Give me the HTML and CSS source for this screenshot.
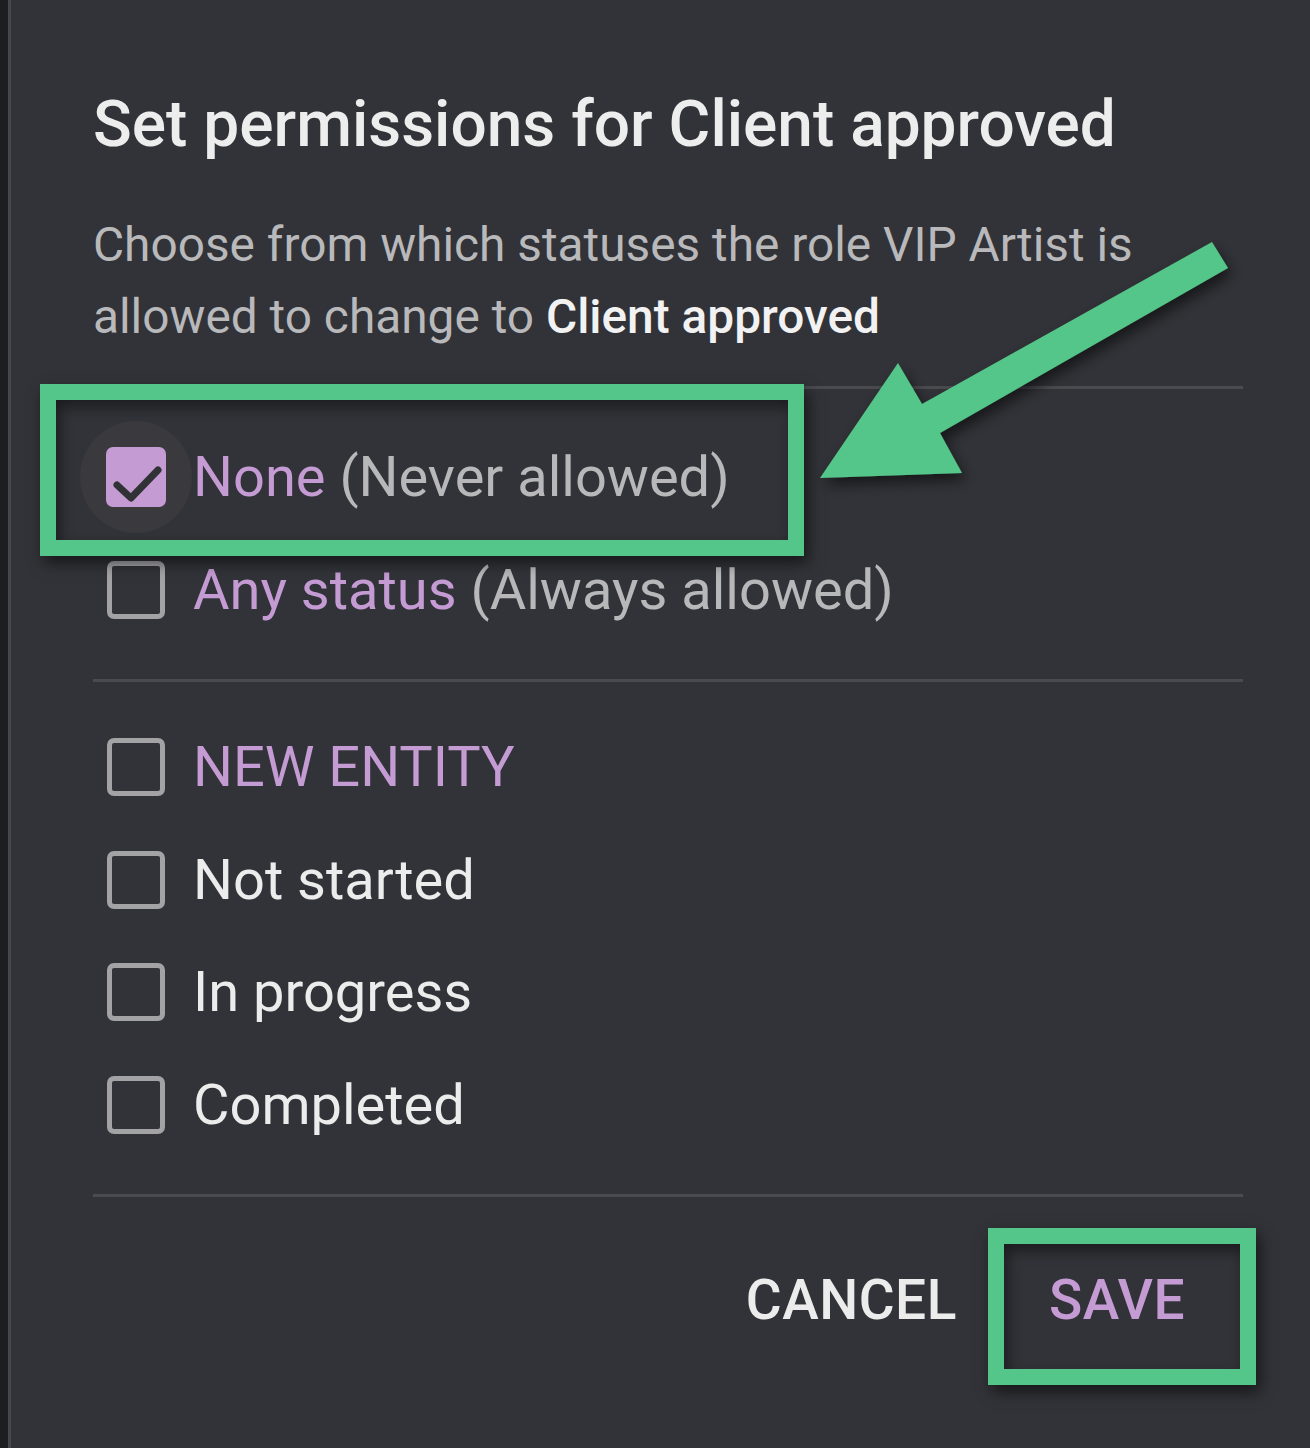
FILE: index.html
```html
<!DOCTYPE html>
<html lang="en">
<head>
    <meta charset="UTF-8">
    <meta name="viewport" content="width=device-width, initial-scale=1.0">
    <title>Set permissions</title>
    <link rel="stylesheet" href="styles.css">
</head>
<body>

<div class="backdrop"></div>

<div class="dialog">
    <h2 class="dialog-title">Set permissions for Client approved</h2>
    <p class="dialog-text">Choose from which statuses the role VIP Artist is allowed to change to <b>Client approved</b></p>

    <hr class="divider">

    <div class="option-list">
        <label class="option">
            <span class="ripple">
                <span class="checkbox checked">
                    <svg viewBox="0 0 60 60" width="60" height="60"><path d="M11 38 L25 51 L52 23" fill="none" stroke="#313236" stroke-width="7" stroke-linecap="round" stroke-linejoin="round"/></svg>
                </span>
            </span>
            <span class="option-label"><span class="accent">None</span> <span class="muted">(Never allowed)</span></span>
        </label>
        <label class="option">
            <span class="checkbox"></span>
            <span class="option-label"><span class="accent">Any status</span> <span class="muted">(Always allowed)</span></span>
        </label>
    </div>

    <hr class="divider divider-tight">

    <div class="option-list">
        <label class="option">
            <span class="checkbox"></span>
            <span class="option-label accent">NEW ENTITY</span>
        </label>
        <label class="option">
            <span class="checkbox"></span>
            <span class="option-label">Not started</span>
        </label>
        <label class="option">
            <span class="checkbox"></span>
            <span class="option-label">In progress</span>
        </label>
        <label class="option">
            <span class="checkbox"></span>
            <span class="option-label">Completed</span>
        </label>
    </div>

    <hr class="divider">

    <div class="dialog-actions">
        <button class="btn">CANCEL</button>
        <button class="btn btn-primary">SAVE</button>
    </div>
</div>

<!-- annotations drawn over the screenshot -->
<div class="mark mark-none"></div>
<div class="mark mark-save"></div>
<svg class="arrow" width="1310" height="1448" viewBox="0 0 1310 1448">
    <defs>
        <filter id="shadow" x="-20%" y="-20%" width="140%" height="140%">
            <feDropShadow dx="4" dy="7" stdDeviation="7" flood-color="#000" flood-opacity="0.55"/>
        </filter>
    </defs>
    <polygon points="1212,242 1228,268 940,433 962,473 820,478 898,363 922,404" fill="#55c689" filter="url(#shadow)"/>
</svg>

</body>
</html>
```

FILE: styles.css
```css
html, body {
    height: 100%;
}
body {
    margin: 0;
    padding: 0;
    display: flex;
    background-color: #323338;
    font-family: Roboto, "Open Sans", Arial, sans-serif;
    overflow: hidden;
}
.backdrop {
    width: 8px;
    background-color: #1c1e22;
    flex-shrink: 0;
}
.dialog {
    flex: 1;
    border-left: 3px solid #46474b;
    padding: 88px 67px 0 82px;
    background-color: #323338;
}
.dialog-title {
    margin: 0;
    font-size: 64px;
    font-weight: 500;
    line-height: 74px;
    color: #ededed;
}
.dialog-text {
    margin: 47px 0 0;
    font-size: 47.8px;
    line-height: 72px;
    color: #b9b9bb;
}
.dialog-text b {
    font-weight: 500;
    color: #f2f2f2;
}
.divider {
    border: none;
    height: 3px;
    background-color: #4a4b4f;
    margin: 33px 0 32px;
}
.divider-tight {
    margin-bottom: 29px;
}
.option-list {
    display: flex;
    flex-direction: column;
}
.option {
    height: 112.5px;
    display: flex;
    align-items: center;
    gap: 28px;
    padding-left: 14px;
    font-size: 56px;
    color: #ececec;
}
.checkbox {
    width: 48px;
    height: 48px;
    border: 5px solid #a3a3a5;
    border-radius: 7px;
    flex-shrink: 0;
}
.checkbox.checked {
    border: none;
    width: 60px;
    height: 60px;
    background-color: #c49bd3;
}
.checkbox svg {
    display: block;
}
.ripple {
    display: flex;
    padding: 26px;
    margin: -26px -27px;
    border-radius: 50%;
    background-color: #39393e;
}
.accent {
    color: #c49bd3;
}
.muted {
    color: #b8b8ba;
}
.dialog-actions {
    display: flex;
    justify-content: flex-end;
    gap: 92px;
    padding: 31px 58px 0 0;
}
.btn {
    background: none;
    border: none;
    padding: 0;
    font-family: inherit;
    font-size: 55px;
    font-weight: 500;
    letter-spacing: 0.5px;
    color: #ececec;
    line-height: 80px;
}
.btn-primary {
    color: #c49bd3;
}
.mark {
    position: absolute;
    border: 16px solid #55c689;
    box-shadow: 4px 7px 14px rgba(0, 0, 0, 0.55), inset 4px 7px 14px rgba(0, 0, 0, 0.45);
}
.mark-none {
    left: 40px;
    top: 384px;
    width: 732px;
    height: 140px;
}
.mark-save {
    left: 988px;
    top: 1228px;
    width: 236px;
    height: 125px;
}
.arrow {
    position: absolute;
    left: 0;
    top: 0;
    pointer-events: none;
}
```
